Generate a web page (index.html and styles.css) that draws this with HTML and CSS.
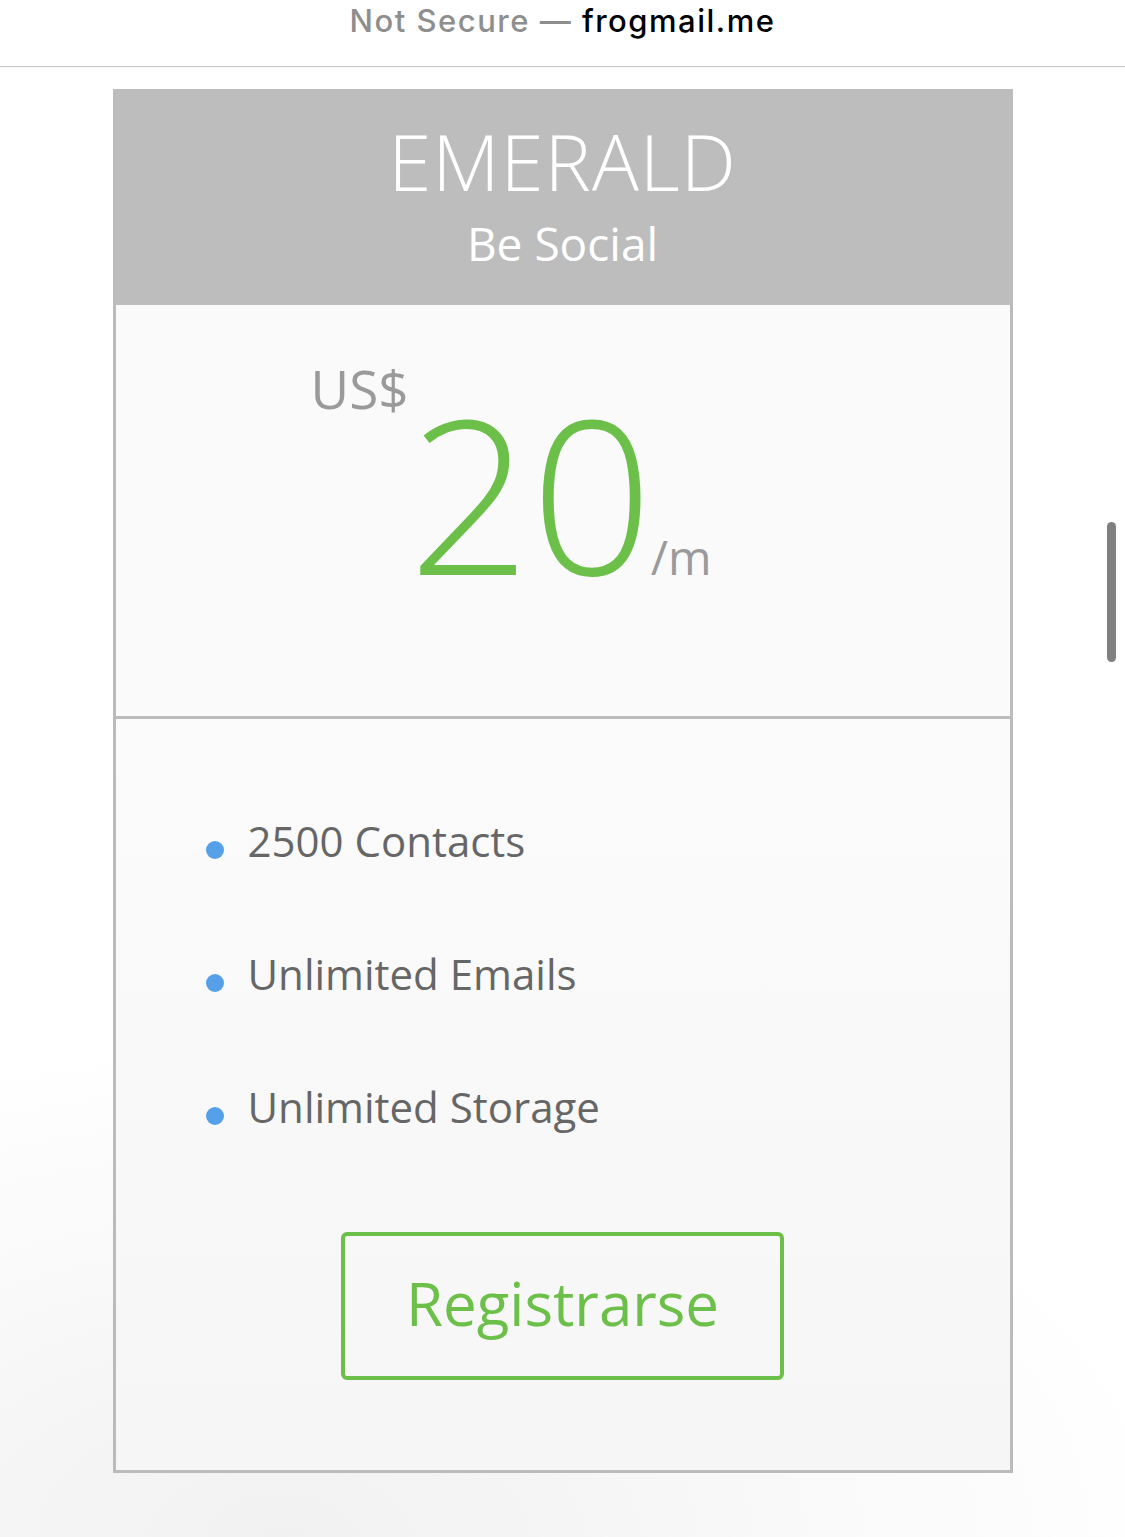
FILE: index.html
```
<!DOCTYPE html>
<html lang="es">
<head>
<meta charset="UTF-8">
<meta name="viewport" content="width=device-width, initial-scale=1.0">
<title>frogmail.me</title>
<link rel="stylesheet" href="styles.css">
</head>
<body>
<div class="address-bar">
  <span class="not-secure">Not Secure &mdash;</span> <span class="domain">frogmail.me</span>
</div>
<div class="page">
  <div class="plan">
    <div class="plan-head">
      <h1 class="plan-name">EMERALD</h1>
      <div class="plan-tagline">Be Social</div>
    </div>
    <div class="plan-price">
      <span class="currency">US$</span>
      <span class="amount">20</span>
      <span class="period">/m</span>
    </div>
    <div class="plan-features">
      <ul class="features">
        <li>2500 Contacts</li>
        <li>Unlimited Emails</li>
        <li>Unlimited Storage</li>
      </ul>
      <a class="btn-signup" href="#">Registrarse</a>
    </div>
  </div>
</div>
<div class="scroll-thumb"></div>
</body>
</html>
```

FILE: styles.css
```
html, body {
  margin: 0;
  padding: 0;
}
body {
  font-family: "Open Sans", "Noto Sans", sans-serif;
  min-height: 1537px;
  background: radial-gradient(ellipse 900px 500px at 25% 100%, #f1f1f1, #ffffff 100%);
}
.address-bar {
  height: 66px;
  border-bottom: 1px solid #c4c4c4;
  background: #fff;
  text-align: center;
  font-family: Inter, "Liberation Sans", sans-serif;
  font-size: 31px;
  font-weight: 500;
  line-height: 42px;
  letter-spacing: 1.5px;
}
.not-secure {
  color: #8e8e8e;
}
.domain {
  color: #000;
}
.page {
  padding-top: 22px;
  display: flex;
  justify-content: center;
}
.plan {
  width: 900px;
}
.plan-head {
  background: #bdbdbd;
  height: 216px;
  text-align: center;
  color: #fff;
}
.plan-name {
  margin: 0;
  padding-top: 27px;
  font-size: 78px;
  font-weight: 300;
  line-height: 90px;
  letter-spacing: 1px;
}
.plan-tagline {
  font-size: 46px;
  font-weight: 400;
  line-height: 74px;
}
.plan-price {
  height: 414px;
  box-sizing: border-box;
  background: #fafafa;
  border-left: 3px solid #bbb;
  border-right: 3px solid #bbb;
  border-bottom: 3px solid #bbb;
  display: flex;
  align-items: flex-start;
  padding-left: 195px;
}
.currency {
  font-size: 53px;
  font-weight: 400;
  color: #9a9a9a;
  line-height: 60px;
  margin-top: 54px;
}
.amount {
  font-size: 214px;
  font-weight: 300;
  color: #6cc04a;
  line-height: 214px;
  margin-top: 80px;
}
.period {
  font-size: 47px;
  font-weight: 400;
  color: #9a9a9a;
  line-height: 50px;
  margin-top: 227px;
  margin-left: -2px;
}
.plan-features {
  height: 754px;
  box-sizing: border-box;
  background: linear-gradient(#fbfbfb, #f6f6f6);
  border-left: 3px solid #bbb;
  border-right: 3px solid #bbb;
  border-bottom: 3px solid #bbb;
  padding-top: 93px;
}
.features {
  list-style: none;
  margin: 0;
  padding: 0 0 0 90px;
}
.features li {
  font-size: 42px;
  color: #666;
  line-height: 58px;
  height: 133px;
  display: flex;
  align-items: flex-start;
}
.features li::before {
  content: "";
  width: 18px;
  height: 18px;
  border-radius: 50%;
  background: #55a0e8;
  margin-top: 29px;
  margin-right: 24px;
  flex-shrink: 0;
}
.btn-signup {
  display: flex;
  align-items: center;
  justify-content: center;
  width: 443px;
  height: 148px;
  box-sizing: border-box;
  margin: 21px auto 0;
  border: 4px solid #6cc04a;
  border-radius: 6px;
  color: #6cc04a;
  font-size: 60px;
  text-decoration: none;
  padding-bottom: 6px;
}
.scroll-thumb {
  position: absolute;
  left: 1107px;
  top: 522px;
  width: 9px;
  height: 140px;
  border-radius: 5px;
  background: #808080;
}
```
